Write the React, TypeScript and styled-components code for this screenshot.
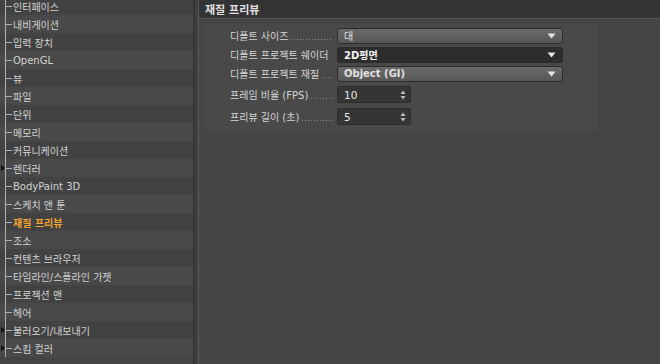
import styled, { createGlobalStyle } from "styled-components";

const GlobalStyle = createGlobalStyle`
  html, body {
    margin: 0;
    padding: 0;
    background: #454545;
    overflow: hidden;
  }
  body {
    font-family: "DejaVu Sans", "Noto Sans CJK KR", sans-serif;
    font-size: 10px;
    color: #d0d0d0;
  }
`;

type NavItem = { label: string; folder?: boolean; active?: boolean };

const navItems: NavItem[] = [
  { label: "인터페이스" },
  { label: "내비게이션" },
  { label: "입력 장치" },
  { label: "OpenGL" },
  { label: "뷰" },
  { label: "파일" },
  { label: "단위" },
  { label: "메모리" },
  { label: "커뮤니케이션" },
  { label: "렌더러", folder: true },
  { label: "BodyPaint 3D" },
  { label: "스케치 앤 툰" },
  { label: "재질 프리뷰", active: true },
  { label: "조소" },
  { label: "컨텐츠 브라우저" },
  { label: "타임라인/스플라인 가젯" },
  { label: "프로젝션 맨" },
  { label: "헤어" },
  { label: "불러오기/내보내기", folder: true },
  { label: "스킴 컬러", folder: true },
];

function App(): JSX.Element {
  return (
    <Layout>
      <GlobalStyle />
      <Sidebar>
        <TreeList>
          {navItems.map((item, i) => (
            <TreeRow key={item.label} $odd={i % 2 === 1}>
              <Branch>
                <VLine />
                <HLine />
                {item.folder && <Expander />}
              </Branch>
              <TreeLabel $active={item.active}>{item.label}</TreeLabel>
            </TreeRow>
          ))}
        </TreeList>
      </Sidebar>
      <Splitter />
      <Panel>
        <PanelHeader>재질 프리뷰</PanelHeader>
        <Group>
          <FieldRow>
            <Label>
              디폴트 사이즈
              <Leader />
            </Label>
            <Dropdown>
              <span>대</span>
              <Arrow />
            </Dropdown>
          </FieldRow>
          <FieldRow>
            <Label>디폴트 프로젝트 쉐이더</Label>
            <Dropdown $dark>
              <span>2D평면</span>
              <Arrow />
            </Dropdown>
          </FieldRow>
          <FieldRow>
            <Label>
              디폴트 프로젝트 재질
              <Leader />
            </Label>
            <Dropdown $bold>
              <span>Object (GI)</span>
              <Arrow />
            </Dropdown>
          </FieldRow>
          <FieldRow $tall>
            <Label>
              프레임 비율 (FPS)
              <Leader />
            </Label>
            <NumberField>
              <span>10</span>
              <Spinner />
            </NumberField>
          </FieldRow>
          <FieldRow $tall>
            <Label>
              프리뷰 길이 (초)
              <Leader />
            </Label>
            <NumberField>
              <span>5</span>
              <Spinner />
            </NumberField>
          </FieldRow>
        </Group>
      </Panel>
    </Layout>
  );
}

function Spinner(): JSX.Element {
  return (
    <SpinIcon width="6" height="10" viewBox="0 0 6 10">
      <path d="M3 0.5 L5.5 4 L0.5 4 Z" fill="#bdbdbd" />
      <path d="M3 9.5 L5.5 6 L0.5 6 Z" fill="#bdbdbd" />
    </SpinIcon>
  );
}

function Arrow(): JSX.Element {
  return (
    <ArrowIcon width="9" height="6" viewBox="0 0 9 6">
      <path d="M0.5 0.5 L8.5 0.5 L4.5 5.5 Z" fill="#e6e6e6" />
    </ArrowIcon>
  );
}

export default App;

const Layout = styled.div`
  display: flex;
  width: 660px;
  height: 364px;
  overflow: hidden;
  background: #454545;
`;

const Sidebar = styled.div`
  width: 193px;
  flex: none;
  overflow: hidden;
  background: #444;
`;

const TreeList = styled.div`
  margin-top: -3px;
  display: flex;
  flex-direction: column;
`;

const TreeRow = styled.div<{ $odd?: boolean }>`
  height: 18px;
  display: flex;
  align-items: center;
  background: ${(p) => (p.$odd ? "#494949" : "#424242")};
`;

const Branch = styled.div`
  flex: none;
  position: relative;
  width: 13px;
  height: 18px;
`;

const VLine = styled.div`
  position: absolute;
  left: 5px;
  top: 0;
  width: 1px;
  height: 18px;
  background: #b0b0b0;
`;

const HLine = styled.div`
  position: absolute;
  left: 5px;
  top: 9px;
  width: 7px;
  height: 1px;
  background: #b0b0b0;
`;

const Expander = styled.div`
  position: absolute;
  left: 1px;
  top: 6px;
  width: 0;
  height: 0;
  border-top: 3px solid transparent;
  border-bottom: 3px solid transparent;
  border-left: 4px solid #111;
`;

const TreeLabel = styled.span<{ $active?: boolean }>`
  font-size: 10px;
  white-space: nowrap;
  color: ${(p) => (p.$active ? "#f2a531" : "#d2d2d2")};
  font-weight: ${(p) => (p.$active ? 700 : 400)};
`;

const Splitter = styled.div`
  width: 6px;
  flex: none;
  background: #3f3f3f;
  border-left: 2px solid #353535;
  border-right: 1px solid #5a5a5a;
  box-sizing: border-box;
`;

const Panel = styled.div`
  flex: 1;
  display: flex;
  flex-direction: column;
  background: #454545;
`;

const PanelHeader = styled.div`
  height: 18px;
  display: flex;
  align-items: center;
  padding-left: 6px;
  background: #333;
  border-bottom: 1px solid #555;
  font-weight: 700;
  font-size: 11px;
  color: #e2e2e2;
`;

const Group = styled.div`
  margin: 5px 0 0 6px;
  width: 368px;
  padding: 3px 0 4px 25px;
  display: flex;
  flex-direction: column;
  gap: 2px;
  background: #494949;
`;

const FieldRow = styled.div<{ $tall?: boolean }>`
  display: grid;
  grid-template-columns: 107px auto;
  align-items: center;
  height: ${(p) => (p.$tall ? "19px" : "17px")};
  margin-top: ${(p) => (p.$tall ? "1px" : "0")};
`;

const Label = styled.div`
  display: flex;
  align-items: baseline;
  white-space: nowrap;
  overflow: hidden;
  color: #d4d4d4;
  font-size: 10px;
  padding-right: 4px;
`;

const Leader = styled.span`
  flex: 1;
  height: 1px;
  margin-left: 3px;
  background-image: repeating-linear-gradient(
    to right,
    #8a8a8a 0,
    #8a8a8a 1px,
    transparent 1px,
    transparent 3px
  );
`;

const Dropdown = styled.div<{ $dark?: boolean; $bold?: boolean }>`
  width: 226px;
  height: 16px;
  box-sizing: border-box;
  display: flex;
  align-items: center;
  justify-content: space-between;
  padding: 0 6px 0 6px;
  border-radius: 3px;
  border: 1px solid #2c2c2c;
  background: ${(p) =>
    p.$dark ? "#2d2d2d" : "linear-gradient(#6a6a6a, #575757)"};
  color: ${(p) => (p.$dark ? "#f4f4f4" : "#e0e0e0")};
  font-weight: ${(p) => (p.$dark || p.$bold ? 700 : 400)};
  font-size: 10px;
`;

const ArrowIcon = styled.svg`
  display: block;
`;

const NumberField = styled.div`
  width: 74px;
  height: 17px;
  box-sizing: border-box;
  display: flex;
  align-items: center;
  justify-content: space-between;
  padding: 0 4px 0 6px;
  border-radius: 2px;
  border: 1px solid #2c2c2c;
  background: #353535;
  color: #e6e6e6;
  font-size: 10.5px;
`;

const SpinIcon = styled.svg`
  display: block;
`;
